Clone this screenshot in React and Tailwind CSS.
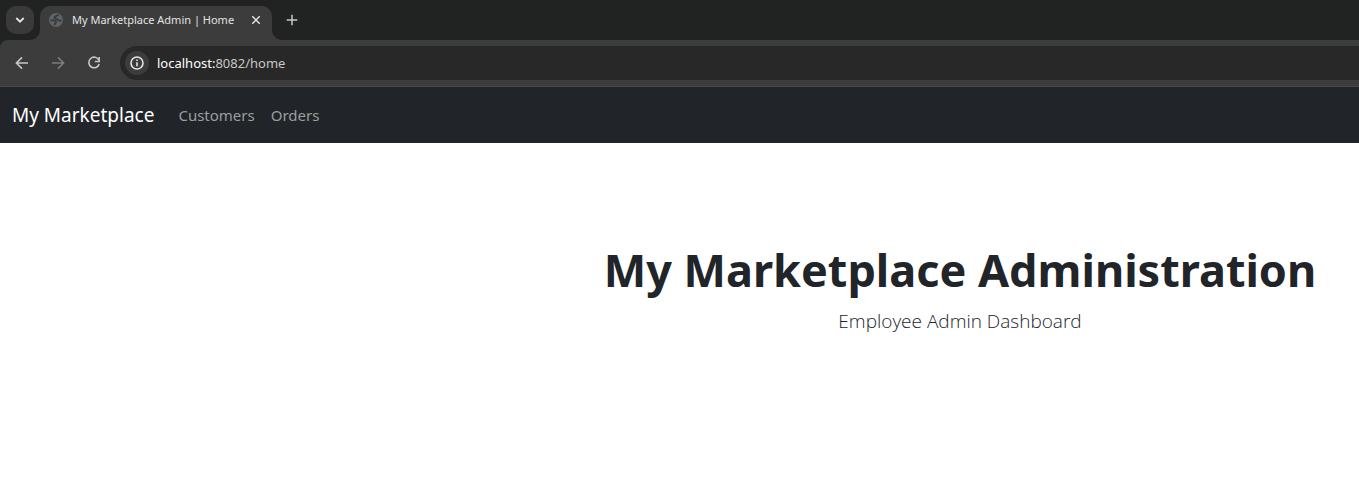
function ArrowIcon({ forward }) {
  return (
    <svg width="16" height="16" viewBox="0 0 16 16" fill="none" stroke="currentColor" strokeWidth="1.6" aria-hidden="true">
      {forward ? <path d="M2 8h11M8 2.4 13.6 8 8 13.6" /> : <path d="M14 8H3M8 2.4 2.4 8 8 13.6" />}
    </svg>
  );
}

function ReloadIcon() {
  return (
    <svg width="16" height="16" viewBox="0 0 16 16" fill="none" aria-hidden="true">
      <path d="M12.9 5.2A5.3 5.3 0 1 0 13.2 9" stroke="currentColor" strokeWidth="1.6" />
      <path d="M14 2v5.2H8.8V5.7h3.6V2z" fill="currentColor" />
    </svg>
  );
}

function GlobeIcon() {
  return (
    <svg width="14" height="14" viewBox="0 0 14 14" className="shrink-0" aria-hidden="true">
      <circle cx="7" cy="7" r="7" fill="#5f6368" />
      <path
        d="M9.4 1.6C9 3 5.4 2.8 5.4 4.6c0 1.6 3 1 3.6 2.4.4 1 1.8 1 3.6.4M1.4 7.4h2.8c2 0 3.2.8 2.8 2-.4.9-1.4.8-1.6 2.8"
        fill="none"
        stroke="#36383a"
        strokeWidth="1.8"
      />
    </svg>
  );
}

function TabStrip() {
  return (
    <div className="flex h-10 items-end bg-[#202322] pl-1.5">
      <button aria-label="Search tabs" className="mb-1.5 flex h-7 w-7 items-center justify-center rounded-[10px] bg-[#3a3a3a] text-[#e3e3e3]">
        <svg width="10" height="10" viewBox="0 0 10 10" fill="none" stroke="currentColor" strokeWidth="1.8" aria-hidden="true">
          <path d="M1.3 3 5 6.7 8.7 3" />
        </svg>
      </button>
      <div className="relative ml-1.5 flex h-[34px] w-[232px] items-center rounded-t-[10px] bg-[#3c3c3c] pb-1.5 pl-[9px] pr-2.5">
        <svg className="absolute -left-2.5 bottom-0" width="10" height="10" aria-hidden="true"><path d="M10 0v10H0A10 10 0 0 0 10 0z" fill="#3c3c3c" /></svg>
        <svg className="absolute -right-2.5 bottom-0" width="10" height="10" aria-hidden="true"><path d="M0 0v10h10A10 10 0 0 1 0 0z" fill="#3c3c3c" /></svg>
        <GlobeIcon />
        <span className="ml-[9px] flex-1 whitespace-nowrap font-['Noto_Sans',sans-serif] text-[11px] leading-4 text-[#e3e3e3]">My Marketplace Admin | Home</span>
        <button aria-label="Close tab" className="flex h-3 w-3 items-center justify-center text-[#e3e3e3]">
          <svg width="10" height="10" viewBox="0 0 10 10" stroke="currentColor" strokeWidth="1.5" aria-hidden="true">
            <path d="M1.3 1.3 8.7 8.7M8.7 1.3 1.3 8.7" />
          </svg>
        </button>
      </div>
      <button aria-label="New tab" className="mb-1.5 ml-1.5 flex h-7 w-7 items-center justify-center text-[#c7c7c7]">
        <svg width="12" height="12" viewBox="0 0 12 12" stroke="currentColor" strokeWidth="1.5" aria-hidden="true">
          <path d="M6 .7v10.6M.7 6h10.6" />
        </svg>
      </button>
    </div>
  );
}

function Toolbar() {
  return (
    <div className="bg-[#202322]">
      <div className="flex h-[47px] items-center rounded-tl-lg border-b border-[#4a4a4a] bg-[#3c3c3c] pl-2">
        <button aria-label="Back" className="flex h-7 w-7 items-center justify-center text-[#c7c7c7]"><ArrowIcon /></button>
        <button aria-label="Forward" disabled className="ml-2 flex h-7 w-7 items-center justify-center text-[#7c7c7c]"><ArrowIcon forward /></button>
        <button aria-label="Reload" className="ml-2 flex h-7 w-7 items-center justify-center text-[#c7c7c7]"><ReloadIcon /></button>
        <div className="ml-3 flex h-[34px] flex-1 items-center rounded-l-full bg-[#282828] pl-[5px]">
          <button aria-label="View site information" className="flex h-6 w-6 items-center justify-center rounded-full bg-[#3c3c3c] text-[#e3e3e3]">
            <svg width="14" height="14" viewBox="0 0 14 14" fill="none" stroke="currentColor" strokeWidth="1.6" aria-hidden="true">
              <circle cx="7" cy="7" r="6" />
              <path d="M7 6.2v4M7 3.6v1.5" />
            </svg>
          </button>
          <a href="/home" aria-label="Address" className="ml-2 font-['Noto_Sans',sans-serif] text-[13px] leading-5 text-[#c7c7c7]">
            <span className="text-white">localhost:</span>8082/home
          </a>
        </div>
      </div>
    </div>
  );
}

export default function App() {
  return (
    <div className="min-h-screen overflow-x-hidden bg-white">
      <header>
        <TabStrip />
        <Toolbar />
      </header>
      <nav className="flex h-14 items-center bg-[#212529] px-3 font-['Noto_Sans',sans-serif]">
        <a href="/home" className="text-[19px] leading-8 text-white">My Marketplace</a>
        <div className="ml-6 flex gap-4 text-[15px] leading-6 text-[#9b9d9f]">
          <a href="/customers">Customers</a>
          <a href="/orders">Orders</a>
        </div>
      </nav>
      <main className="pl-[561px] pt-[97px] text-center font-['Noto_Sans',sans-serif] text-[#212529]">
        <h1 className="whitespace-nowrap text-[45px] font-bold leading-[60px]">My Marketplace Administration</h1>
        <p className="mt-1.5 font-['Open_Sans',sans-serif] text-[19px] font-light leading-[30px]">Employee Admin Dashboard</p>
      </main>
    </div>
  );
}
